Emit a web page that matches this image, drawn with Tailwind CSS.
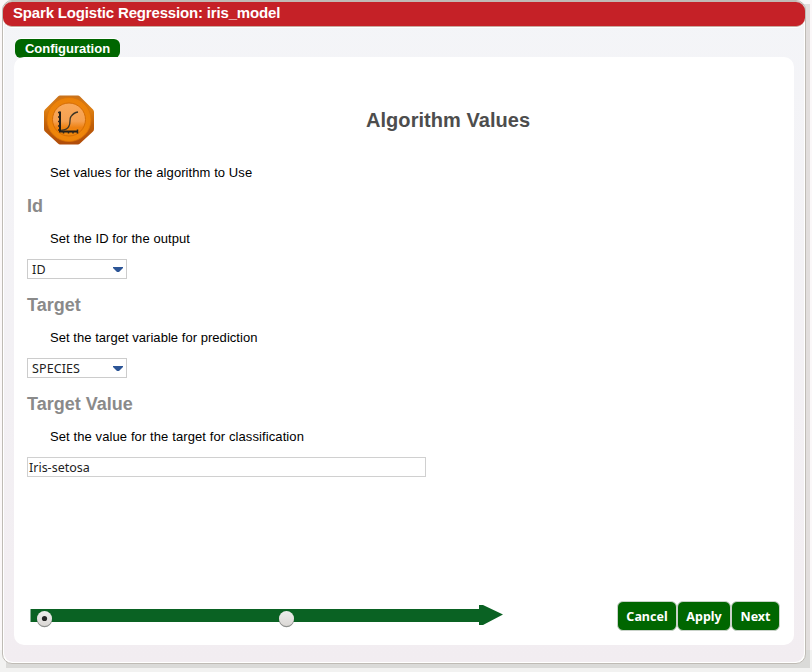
<!DOCTYPE html>
<html lang="en">
<head>
<meta charset="utf-8">
<title>Spark Logistic Regression</title>
<script src="https://cdn.jsdelivr.net/npm/@tailwindcss/browser@4"></script>
</head>
<body class="w-[812px] h-[672px] overflow-hidden bg-[linear-gradient(#fbf8f9_650px,#f2f2f1_650px)] pl-[6px] pt-[4px] font-['Liberation_Sans',sans-serif] text-[13px] text-black">
<div class="w-[804px] h-[664px] bg-[linear-gradient(#e2dedd_646px,#dadad8_646px)]">
<div class="relative -left-[4px] -top-[4px] w-[804px] h-[664px] rounded-[10px] border border-[#bfbbb5] bg-white p-px">
<div class="flex flex-col w-full h-full rounded-[9px] bg-linear-to-b from-[#f4f5f8] to-[#f2edf1]">
  <header class="-mx-px h-[25px] shrink-0 rounded-[9px] bg-[#c52127] border-b border-[#c8aaa0] pl-[10px] text-[15px] leading-[22px] font-bold text-white shadow-[0_-1px_0_#c3b8b4,0_1px_0_white]"><span class="whitespace-nowrap tracking-[-0.17px]">Spark Logistic Regression: iris_model</span></header>
  <div class="pl-[11px] pt-[12px] h-[30px] shrink-0">
    <div class="w-[105px] h-[19px] rounded-[6px] bg-[#006600] text-white font-bold leading-[19px] text-center shadow-[0_-1px_0_white]">Configuration</div>
  </div>
  <main class="flex flex-col ml-[10px] w-[780px] h-[588px] rounded-[10px] bg-white pl-[13px] pr-[14px]">
    <div class="flex items-start pt-[38px] pl-[16px] h-[107px]">
      <svg class="w-[52px] h-[52px] shrink-0" viewBox="0 0 52 52">
        <defs>
          <linearGradient id="edge" x2="0" y2="1"><stop offset="0" stop-color="#c8721c"/><stop offset=".3" stop-color="#dd7e12"/><stop offset=".6" stop-color="#c05f08"/><stop offset="1" stop-color="#b04c0a"/></linearGradient>
          <radialGradient id="disc" cx=".5" cy=".6" r=".65"><stop offset="0" stop-color="#f48c0c"/><stop offset="1" stop-color="#ea8008"/></radialGradient>
          <linearGradient id="gloss" x2="0" y2="1"><stop offset="0" stop-color="#f9a95c"/><stop offset=".55" stop-color="#f5a050"/><stop offset=".75" stop-color="#ee8110"/><stop offset="1" stop-color="#f08a0c"/></linearGradient>
        </defs>
        <path d="M17 .5H35Q36 .5 37 1.500L50 14.500Q51 15.500 51 17V34Q51 35.500 50 36.500L37 48.500Q36 49.500 35 49.500H17Q16 49.500 15 48.500L2 36.500Q1 35.500 1 34V17Q1 15.500 2 14.500L15 1.500Q16 .5 17 .5Z" fill="url(#edge)"/>
        <circle cx="26" cy="24.500" r="22" fill="url(#disc)" stroke="#dc7406" stroke-width=".8"/>
        <circle cx="26" cy="24.500" r="16.500" fill="url(#gloss)" stroke="#d46c04"/>
        <path d="M17 16.500V36.500H35" fill="none" stroke="#221e18" stroke-width="2"/>
        <path d="M15 17.500H17M15 22H17M15 26.500H17M15 31H17M15 35H17M20.500 36V38.500M25.500 36V38.500M30 36V38.500M34.500 34.500V38.500" fill="none" stroke="#29251e" stroke-width="1.500"/>
        <path d="M18 35.500C22 35 25 34 26 31C28 27 26 24 28 21.500C30 18.500 32 17.500 35 17" fill="none" stroke="#3d3525" stroke-width="1.300"/>
      </svg>
      <h1 class="ml-[271px] mt-[13px] whitespace-nowrap text-[20px] leading-[24px] font-bold tracking-[0.05px] text-[#4d4d4d]">Algorithm Values</h1>
    </div>
    <p class="pl-[23px] h-[31px] leading-[17px] tracking-[0.08px]">Set values for the algorithm to Use</p>
    <h2 class="h-[35px] text-[18px] leading-[22px] font-bold text-[#8a8a8a]">Id</h2>
    <p class="pl-[23px] h-[29px] leading-[17px] tracking-[0.08px]">Set the ID for the output</p>
    <div class="w-[100px] h-[20px] shrink-0 border border-[#ccc] flex items-center justify-between pl-[4px] pr-[3px] font-['Noto_Sans',sans-serif] leading-[18px] text-[#222]"><span class="pt-px text-[12.500px] tracking-[0.2px]">ID</span><svg class="w-[10px] h-[5px]" viewBox="0 0 10 5"><path d="M0 0H10V1L6 5H4L0 1Z" fill="#2c5596"/></svg></div>
    <h2 class="mt-[15px] h-[35px] text-[18px] leading-[22px] font-bold text-[#8a8a8a]">Target</h2>
    <p class="pl-[23px] h-[29px] leading-[17px] tracking-[0.04px]">Set the target variable for prediction</p>
    <div class="w-[100px] h-[20px] shrink-0 border border-[#ccc] flex items-center justify-between pl-[4px] pr-[3px] font-['Noto_Sans',sans-serif] leading-[18px] text-[#222]"><span class="pt-px text-[12.500px] tracking-[0.1px]">SPECIES</span><svg class="w-[10px] h-[5px]" viewBox="0 0 10 5"><path d="M0 0H10V1L6 5H4L0 1Z" fill="#2c5596"/></svg></div>
    <h2 class="mt-[15px] h-[35px] text-[18px] leading-[22px] font-bold text-[#8a8a8a]">Target Value</h2>
    <p class="pl-[23px] h-[29px] leading-[17px] tracking-[0.1px]">Set the value for the target for classification</p>
    <div class="w-[399px] h-[20px] shrink-0 border border-[#d0d0d0] pl-[1px] font-['Noto_Sans',sans-serif] text-[12.500px] leading-[19px] text-[#222]">Iris-setosa</div>
    <footer class="mt-auto mb-[14px] flex justify-between h-[30px]">
      <svg class="w-[480px] h-[30px]" viewBox="0 0 480 30">
        <defs><linearGradient id="knob" x2="0" y2="1"><stop offset="0" stop-color="#ededec"/><stop offset="1" stop-color="#dbd8d5"/></linearGradient></defs>
        <path d="M4 8H452V4H456L476 13.500L456 24H452V21H4Z" fill="#0a6223"/>
        <path d="M3.500 8V21" stroke="#8ab097"/>
        <circle cx="17.500" cy="18.700" r="7.500" fill="#8e908e"/><circle cx="17.500" cy="17.500" r="7.500" fill="url(#knob)"/><circle cx="17.500" cy="17.500" r="2.600" fill="#242424"/>
        <circle cx="259.500" cy="18.700" r="7.500" fill="#8e908e"/><circle cx="259.500" cy="17.500" r="7.500" fill="url(#knob)"/>
      </svg>
      <div class="flex font-['Noto_Sans',sans-serif] text-[12.500px] leading-[29px] font-bold text-white text-center">
        <div class="w-[60px] h-[30px] rounded-[6px] bg-[#006600] border border-[#c9d2c9]">Cancel</div>
        <div class="w-[54px] h-[30px] rounded-[6px] bg-[#006600] border border-[#c9d2c9]">Apply</div>
        <div class="w-[49px] h-[30px] rounded-[6px] bg-[#006600] border border-[#c9d2c9]">Next</div>
      </div>
    </footer>
  </main>
</div>
</div>
</div>
</body>
</html>
